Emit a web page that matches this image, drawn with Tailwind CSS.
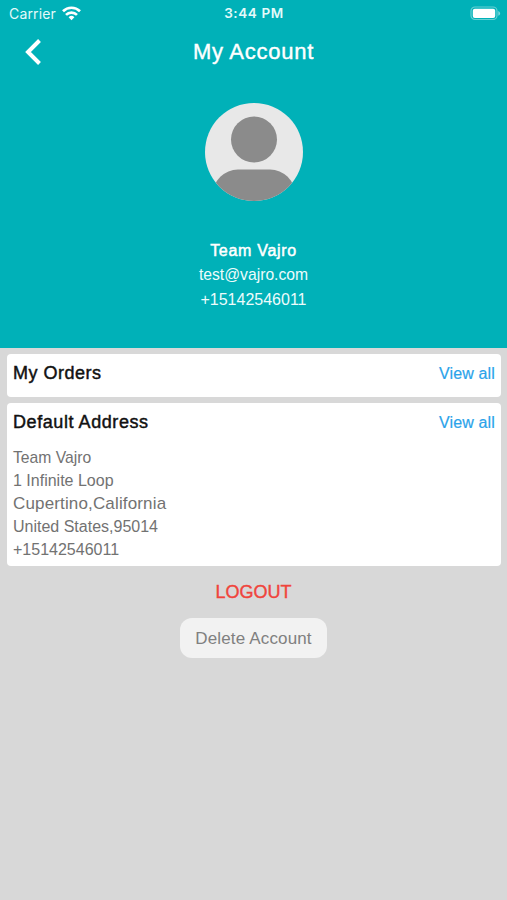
<!DOCTYPE html>
<html lang="en">
<head>
    <meta charset="UTF-8">
    <meta name="viewport" content="width=device-width, initial-scale=1.0">
    <title>My Account</title>
    <script src="https://cdn.jsdelivr.net/npm/@tailwindcss/browser@4"></script>
</head>
<body class="bg-[#d8d8d8] min-h-screen font-['Liberation_Sans',Arial,sans-serif]">
    <!-- Header -->
    <header class="bg-[#00b1b8] text-white h-[348px] flex flex-col">
        <!-- Status bar -->
        <div class="h-[27px] shrink-0 grid grid-cols-3 items-center pl-[9px] pr-[6px] font-[Inter,sans-serif] text-[#e4fafa]">
            <div class="flex items-center gap-[6px]">
                <span class="text-[14px] tracking-[0.15px]">Carrier</span>
                <svg class="w-[19px] h-[15px]" viewBox="0 0 19 15" fill="none" stroke="white" stroke-width="2.7">
                    <path d="M1 5.2a12.2 12.2 0 0 1 17 0"/>
                    <path d="M4 8.9a7.8 7.8 0 0 1 11 0"/>
                    <path d="M9.5 14.2L6.6 11.3a4.1 4.1 0 0 1 5.8 0z" fill="white" stroke="none"/>
                </svg>
            </div>
            <span class="text-[13.5px] font-semibold text-center tracking-[0.6px] mr-[2px] whitespace-nowrap">3:44 PM</span>
            <svg class="w-[31px] h-[15px] justify-self-end" viewBox="0 0 31 15" fill="none">
                <rect x="1" y="1" width="26" height="12.5" rx="4" stroke="white" stroke-opacity=".4" stroke-width="1.2"/>
                <rect x="2.8" y="2.8" width="22.4" height="9.2" rx="2" fill="white"/>
                <path d="M28.3 5v4.8q1.8-.8 1.8-2.4T28.3 5z" fill="white" fill-opacity=".5"/>
            </svg>
        </div>
        <!-- Title bar -->
        <div class="h-[50px] shrink-0 grid grid-cols-[1fr_auto_1fr] items-center pl-[24px]">
            <button class="w-[20px] h-[26px]" aria-label="Back">
                <svg class="w-[20px] h-[26px]" viewBox="0 0 20 26" fill="none" stroke="white" stroke-width="4">
                    <path d="M15.5 1.5L4 13l11.5 11.5"/>
                </svg>
            </button>
            <h1 class="text-[22px] leading-[26px] tracking-[0.75px] mr-[24px] [-webkit-text-stroke:0.4px]">My Account</h1>
        </div>
        <!-- Profile -->
        <div class="flex flex-col items-center pt-[26px]">
            <svg class="w-[98px] h-[98px]" viewBox="0 0 98 98">
                <clipPath id="avatar"><circle cx="49" cy="49" r="49"/></clipPath>
                <g clip-path="url(#avatar)">
                    <rect width="98" height="98" fill="#e8e8e8"/>
                    <circle cx="49" cy="36.5" r="23" fill="#8b8b8b"/>
                    <rect x="8" y="66.5" width="82" height="60" rx="25" fill="#8b8b8b"/>
                </g>
            </svg>
            <div class="mt-[38px] text-center text-[16px] leading-[24.3px] text-[#ecfcfc]">
                <p class="text-white tracking-[0.7px] [-webkit-text-stroke:0.5px]">Team Vajro</p>
                <p class="text-[15.7px]">test@vajro.com</p>
                <p>+15142546011</p>
            </div>
        </div>
    </header>

    <main class="pl-[7px] pr-[6px] pt-[6px] flex flex-col gap-[6px]">
        <section class="bg-white rounded-[4px] h-[43px] px-[6px] flex items-start justify-between pt-[7px]">
            <h2 class="text-[18px] leading-[25px] tracking-[0.5px] text-[#111] [-webkit-text-stroke:0.45px]">My Orders</h2>
            <a href="#" class="text-[16px] leading-[25px] text-[#2ba3ea] tracking-[0.15px] [-webkit-text-stroke:0.2px]">View all</a>
        </section>
        <section class="bg-white rounded-[4px] h-[163px] px-[6px] pt-[7px]">
            <div class="flex items-start justify-between">
                <h2 class="text-[18px] leading-[25px] tracking-[0.57px] text-[#111] [-webkit-text-stroke:0.45px]">Default Address</h2>
                <a href="#" class="text-[16px] leading-[25px] text-[#2ba3ea] tracking-[0.15px] [-webkit-text-stroke:0.2px]">View all</a>
            </div>
            <div class="mt-[11px] text-[16px] leading-[23px] text-[#727272]">
                <p class="text-[15.7px]">Team Vajro</p>
                <p>1 Infinite Loop</p>
                <p class="text-[17px] tracking-[0.15px]">Cupertino,California</p>
                <p>United States,95014</p>
                <p>+15142546011</p>
            </div>
        </section>
    </main>

    <div class="flex flex-col items-center">
        <button class="mt-[14px] text-[18px] leading-[25px] text-[#f0443c] [-webkit-text-stroke:0.4px]">LOGOUT</button>
        <button class="mt-[13px] w-[147px] h-[40px] rounded-[12px] bg-[#f2f2f2] pt-[1px] text-[17px] tracking-[0.15px] text-[#808080]">Delete Account</button>
    </div>
</body>
</html>
